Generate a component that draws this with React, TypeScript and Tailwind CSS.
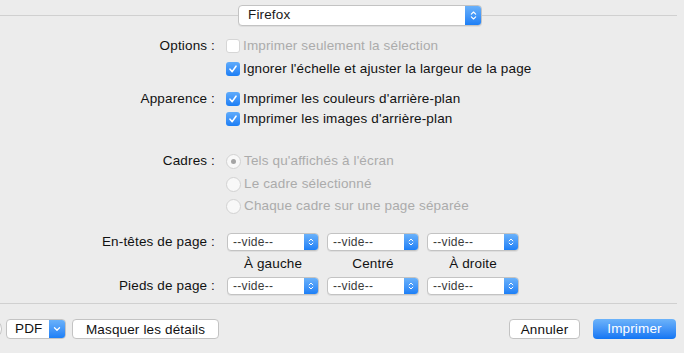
import React from "react";

const font = { fontFamily: '"Liberation Sans", Arial, sans-serif' };

function UpDown({ size = 8 }: { size?: number }) {
  return (
    <svg width={size} height={size + 4} viewBox="0 0 8 12" fill="none">
      <path d="M1.5 4.5 L4 2 L6.5 4.5" stroke="white" strokeWidth="1.3" strokeLinecap="round" strokeLinejoin="round" />
      <path d="M1.5 7.5 L4 10 L6.5 7.5" stroke="white" strokeWidth="1.3" strokeLinecap="round" strokeLinejoin="round" />
    </svg>
  );
}

function Popup({ label, className, small }: { label: string; className: string; small?: boolean }) {
  return (
    <div
      className={`flex items-stretch bg-white border border-[#c3c3c3] rounded-[4px] shadow-[0_1px_0_rgba(0,0,0,0.06)] overflow-hidden ${className}`}
    >
      <div
        className={`flex-1 flex items-center ${
          small ? "pl-[5px] text-[12px] tracking-[0.3px] text-[#3a3a3a]" : "pl-[9px] text-[13.5px] tracking-[0.15px] text-[#1a1a1a]"
        }`}
      >
        {label}
      </div>
      <div className={`flex items-center justify-center bg-gradient-to-b from-[#69b1fa] to-[#1c7ff6] ${small ? "w-[14px]" : "w-[16px]"}`}>
        <UpDown size={small ? 6 : 7} />
      </div>
    </div>
  );
}

function Check({ on, disabled }: { on?: boolean; disabled?: boolean }) {
  if (on) {
    return (
      <div className="w-[14px] h-[14px] rounded-[3px] bg-gradient-to-b from-[#5fabfb] to-[#1a7ef5] flex items-center justify-center shrink-0">
        <svg width="10" height="10" viewBox="0 0 10 10" fill="none">
          <path d="M2 5.2 L4.2 7.6 L8 2.2" stroke="white" strokeWidth="1.6" strokeLinecap="round" strokeLinejoin="round" />
        </svg>
      </div>
    );
  }
  return (
    <div
      className={`w-[14px] h-[14px] rounded-[3px] bg-white border shrink-0 ${disabled ? "border-[#d6d6d6] bg-[#f7f7f7]" : "border-[#b5b5b5]"}`}
    />
  );
}

function Radio({ on }: { on?: boolean }) {
  return (
    <div className="w-[15px] h-[15px] rounded-full border border-[#d2d2d2] bg-[#f8f8f8] flex items-center justify-center shrink-0">
      {on && <div className="w-[5px] h-[5px] rounded-full bg-[#a4a4a4]" />}
    </div>
  );
}

function Row({ label, children, className = "" }: { label?: string; children: React.ReactNode; className?: string }) {
  return (
    <div className={`flex items-center h-[20px] ${className}`}>
      <div className="w-[216px] text-right text-[13.5px] tracking-[0.15px] text-[#111] pr-[1px] whitespace-nowrap">{label}</div>
      <div className="ml-[10px] flex items-center gap-[3px] text-[13.5px] tracking-[0.15px] whitespace-nowrap">{children}</div>
    </div>
  );
}

export default function App() {
  return (
    <div className="w-[684px] h-[353px] bg-[#ececec] overflow-hidden flex flex-col" style={font}>
      {/* top bar with printer popup */}
      <div className="h-[30px] flex items-center mr-[7px]">
        <div className="w-[238px] h-px bg-[#d0d0d0]" />
        <Popup label="Firefox" className="w-[244px] h-[21px]" />
        <div className="flex-1 h-px bg-[#d0d0d0]" />
      </div>

      <Row label="Options :" className="mt-[6px]">
        <Check disabled />
        <span className="text-[#ababab]">Imprimer seulement la sélection</span>
      </Row>
      <Row className="mt-[3px]">
        <Check on />
        <span className="text-[#111]">Ignorer l'échelle et ajuster la largeur de la page</span>
      </Row>

      <Row label="Apparence :" className="mt-[10px]">
        <Check on />
        <span className="text-[#111]">Imprimer les couleurs d'arrière-plan</span>
      </Row>
      <Row>
        <Check on />
        <span className="text-[#111]">Imprimer les images d'arrière-plan</span>
      </Row>

      <Row label="Cadres :" className="mt-[22px]">
        <Radio on />
        <span className="text-[#ababab]">Tels qu'affichés à l'écran</span>
      </Row>
      <Row className="mt-[3px]">
        <Radio />
        <span className="text-[#ababab]">Le cadre sélectionné</span>
      </Row>
      <Row className="mt-[2px]">
        <Radio />
        <span className="text-[#ababab]">Chaque cadre sur une page séparée</span>
      </Row>

      <Row label="En-têtes de page :" className="mt-[16px]">
        <div className="flex gap-[8px] ml-[1px]">
          <Popup small label="--vide--" className="w-[92px] h-[18px]" />
          <Popup small label="--vide--" className="w-[92px] h-[18px]" />
          <Popup small label="--vide--" className="w-[92px] h-[18px]" />
        </div>
      </Row>
      <Row className="mt-[2px]">
        <div className="flex gap-[8px] ml-[1px] text-[#111]">
          <div className="w-[92px] text-center">À gauche</div>
          <div className="w-[92px] text-center">Centré</div>
          <div className="w-[92px] text-center">À droite</div>
        </div>
      </Row>
      <Row label="Pieds de page :" className="mt-[2px]">
        <div className="flex gap-[8px] ml-[1px]">
          <Popup small label="--vide--" className="w-[92px] h-[18px]" />
          <Popup small label="--vide--" className="w-[92px] h-[18px]" />
          <Popup small label="--vide--" className="w-[92px] h-[18px]" />
        </div>
      </Row>

      <div className="mt-[7px] h-px bg-[#d0d0d0] mr-[7px]" />

      {/* bottom buttons */}
      <div className="mt-[15px] h-[20px] flex items-center text-[13.5px] tracking-[0.15px]">
        <div className="w-[22px] h-[22px] rounded-full bg-white border border-[#c3c3c3] -ml-[20px] shrink-0" />
        <div className="ml-[4px] w-[60px] h-[20px] flex bg-white border border-[#c3c3c3] rounded-[4px] overflow-hidden">
          <div className="flex-1 flex items-center pl-[8px] text-[#111]">PDF</div>
          <div className="w-[16px] flex items-center justify-center bg-gradient-to-b from-[#69b1fa] to-[#1c7ff6]">
            <svg width="8" height="6" viewBox="0 0 8 6" fill="none">
              <path d="M1.5 1.8 L4 4.2 L6.5 1.8" stroke="white" strokeWidth="1.3" strokeLinecap="round" strokeLinejoin="round" />
            </svg>
          </div>
        </div>
        <button className="ml-[6px] w-[147px] h-[20px] bg-white border border-[#c3c3c3] rounded-[4px] text-[#111]">
          Masquer les détails
        </button>
        <div className="flex-1" />
        <button className="w-[71px] h-[20px] bg-white border border-[#c3c3c3] rounded-[4px] text-[#111]">
          Annuler
        </button>
        <button className="ml-[13px] mr-[8px] w-[83px] h-[20px] rounded-[4px] bg-gradient-to-b from-[#6cb3fa] to-[#0f75f3] text-white">
          Imprimer
        </button>
      </div>
    </div>
  );
}
